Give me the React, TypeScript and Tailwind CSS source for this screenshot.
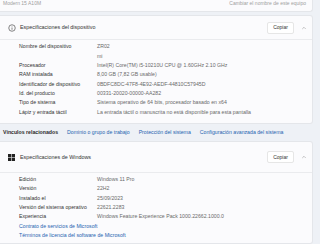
import { ChevronUp } from "lucide-react";

type Row = { label: string; value: string };

const deviceRows: Row[] = [
  { label: "Nombre del dispositivo", value: "ZR02" },
  { label: "", value: "mi" },
  { label: "Procesador", value: "Intel(R) Core(TM) i5-10210U CPU @ 1.60GHz   2.10 GHz" },
  { label: "RAM instalada", value: "8,00 GB (7,82 GB usable)" },
  { label: "Identificador de dispositivo", value: "0BDFC8DC-47F8-4E92-AEDF-44810C57945D" },
  { label: "Id. del producto", value: "00331-20020-00000-AA282" },
  { label: "Tipo de sistema", value: "Sistema operativo de 64 bits, procesador basado en x64" },
  { label: "Lápiz y entrada táctil", value: "La entrada táctil o manuscrita no está disponible para esta pantalla" },
];

const windowsRows: Row[] = [
  { label: "Edición", value: "Windows 11 Pro" },
  { label: "Versión", value: "22H2" },
  { label: "Instalado el", value: "25/09/2023" },
  { label: "Versión del sistema operativo", value: "22621.2283" },
  { label: "Experiencia", value: "Windows Feature Experience Pack 1000.22662.1000.0" },
];

function InfoIcon() {
  return (
    <svg width="8" height="8" viewBox="0 0 16 16" fill="none" stroke="#444" strokeWidth="1.3">
      <circle cx="8" cy="8" r="6.5" />
      <line x1="8" y1="7" x2="8" y2="11.5" />
      <circle cx="8" cy="4.8" r="0.6" fill="#444" stroke="none" />
    </svg>
  );
}

function WinIcon() {
  return (
    <svg width="7" height="7" viewBox="0 0 16 16" fill="#222">
      <rect x="0" y="0" width="7.4" height="7.4" />
      <rect x="8.6" y="0" width="7.4" height="7.4" />
      <rect x="0" y="8.6" width="7.4" height="7.4" />
      <rect x="8.6" y="8.6" width="7.4" height="7.4" />
    </svg>
  );
}

function CardHeader({ icon, title, h }: { icon: React.ReactNode; title: string; h: string }) {
  return (
    <div className={`flex items-center pl-[4px] pr-[4px] ${h}`}>
      <div className="w-[15px] flex justify-center">{icon}</div>
      <span className="ml-[1px] text-[5.4px] text-[#333]">{title}</span>
      <button className="ml-auto h-[12px] w-[27px] rounded-[2px] bg-white border border-[#e6e6e6] text-[5px] text-[#333]">
        Copiar
      </button>
      <ChevronUp className="ml-[7px] mr-[1px]" size={6} strokeWidth={1.5} color="#666" />
    </div>
  );
}

function InfoRow({ row }: { row: Row }) {
  return (
    <div className="flex h-[9.35px] items-center">
      <span className="w-[78px] shrink-0 text-[#333]">{row.label}</span>
      <span className="text-[#6a6a6a] whitespace-nowrap">{row.value}</span>
    </div>
  );
}

export default function App() {
  return (
    <div className="w-[320px] h-[244px] overflow-hidden bg-[#eef1f6] font-['Liberation_Sans',sans-serif]">
      <div className="mr-[7px]">
        {/* top card, cut off */}
        <div className="h-[12px] bg-[#fbfbfd] border-b border-r border-[#e4e6ea] rounded-br-[3px] flex items-start justify-between pl-[3px] pr-[6px] text-[5px] text-[#a0a0a0]">
          <span className="-mt-[0.5px]">Modern 15 A10M</span>
          <span className="-mt-[0.5px]">Cambiar el nombre de este equipo</span>
        </div>

        {/* device specs */}
        <div className="mt-[3px] bg-[#fbfbfd] border border-l-0 border-[#e4e6ea] rounded-r-[3px]">
          <CardHeader icon={<InfoIcon />} title="Especificaciones del dispositivo" h="h-[23px]" />
          <div className="border-t border-[#eaebee] pt-[2.5px] pb-[6px] pl-[19px] text-[5.2px]">
            {deviceRows.map((r, i) => (
              <InfoRow key={i} row={r} />
            ))}
          </div>
        </div>

        {/* related links */}
        <div className="h-[17px] flex items-center pl-[3px] text-[5.2px] gap-[9px]">
          <span className="font-bold text-[#2a2a2a]">Vínculos relacionados</span>
          <span className="text-[#2563b0]">Dominio o grupo de trabajo</span>
          <span className="text-[#2563b0]">Protección del sistema</span>
          <span className="text-[#2563b0]">Configuración avanzada del sistema</span>
        </div>

        {/* windows specs */}
        <div className="bg-[#fbfbfd] border border-l-0 border-[#e4e6ea] rounded-r-[3px]">
          <CardHeader icon={<WinIcon />} title="Especificaciones de Windows" h="h-[30px]" />
          <div className="border-t border-[#eaebee] pt-[2px] pb-[2.5px] pl-[19px] text-[5.2px]">
            {windowsRows.map((r, i) => (
              <InfoRow key={i} row={r} />
            ))}
            <div className="h-[9.35px] flex items-center text-[#2563b0]">Contrato de servicios de Microsoft</div>
            <div className="h-[9.35px] flex items-center text-[#2563b0]">Términos de licencia del software de Microsoft</div>
          </div>
        </div>
      </div>
    </div>
  );
}
